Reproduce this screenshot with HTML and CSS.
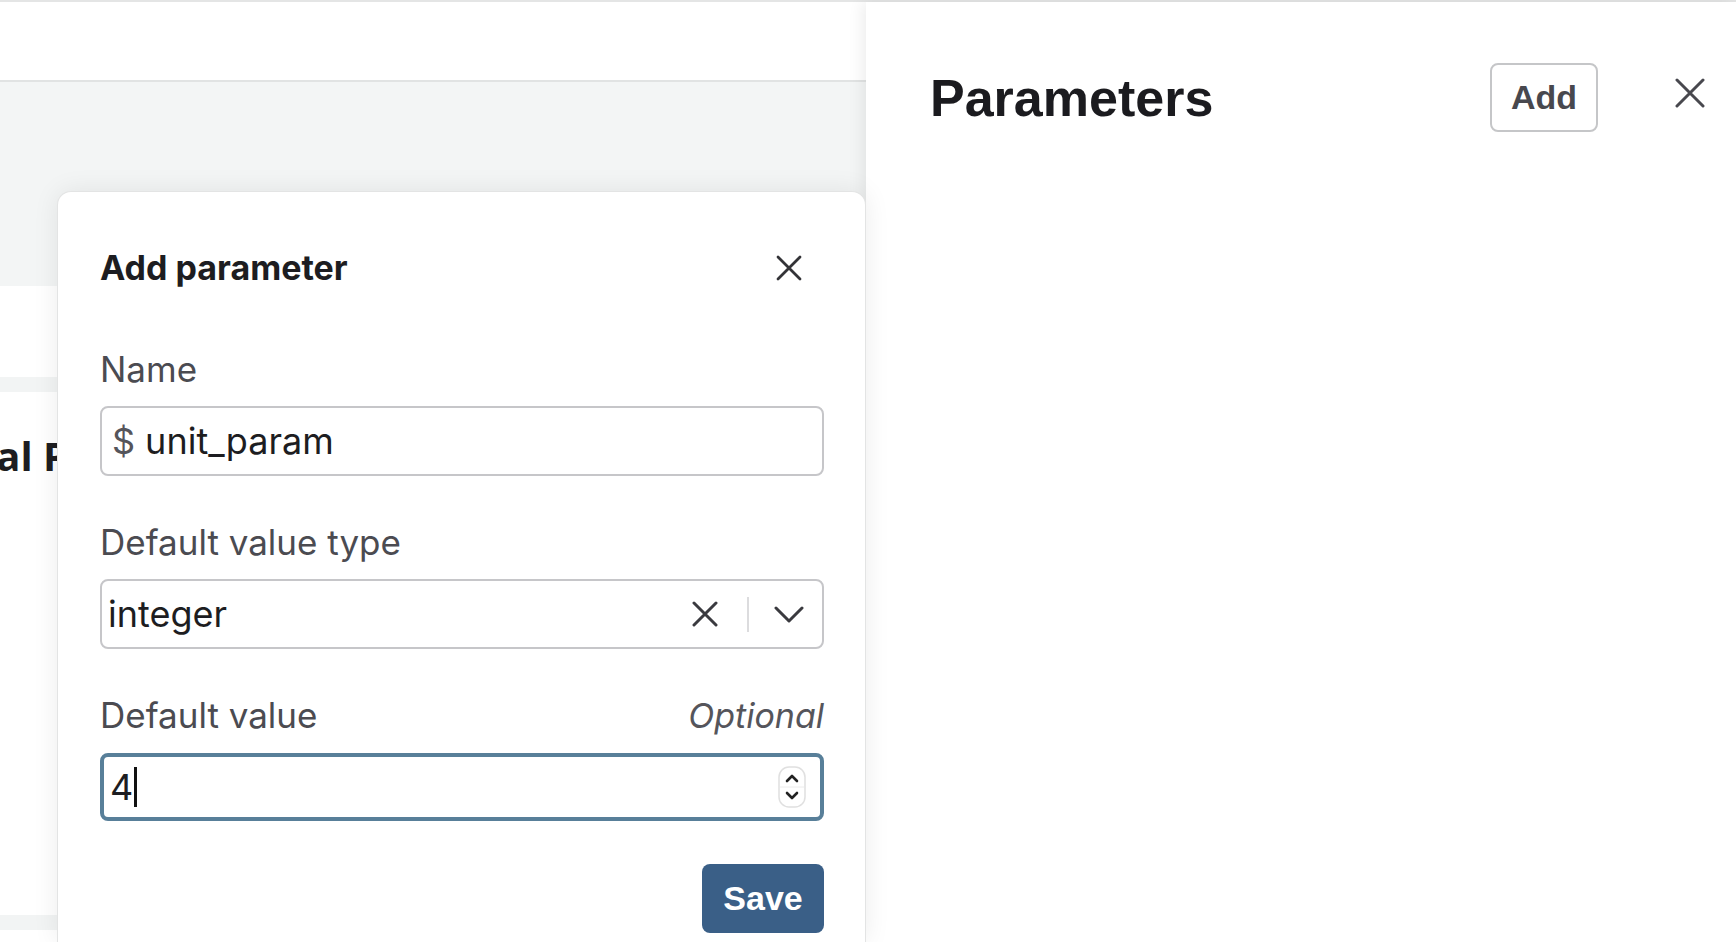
FILE: index.html
```html
<!DOCTYPE html>
<html lang="en">
<head>
<meta charset="utf-8">
<title>Parameters</title>
<link rel="stylesheet" href="styles.css">
</head>
<body>
<div class="page">
  <main class="main">
    <div class="main-header"></div>
    <div class="band"></div>
    <div class="gap-a"></div>
    <div class="strip"></div>
    <div class="section">
      <div class="section-clip">
        <h2 class="section-title">Global Parameters</h2>
      </div>
    </div>
    <div class="strip"></div>
  </main>
  <aside class="drawer">
    <div class="drawer-header">
      <h1 class="drawer-title">Parameters</h1>
      <button class="btn-add" type="button">Add</button>
      <button class="icon-btn drawer-close" type="button" aria-label="Close">
        <svg width="30" height="30" viewBox="0 0 30 30"><path d="M2 2 L28 28 M28 2 L2 28" stroke="#48484e" stroke-width="3" stroke-linecap="round" fill="none"/></svg>
      </button>
    </div>
  </aside>
</div>

<div class="modal">
  <div class="modal-header">
    <h3 class="modal-title">Add parameter</h3>
    <button class="icon-btn modal-close" type="button" aria-label="Close">
      <svg width="26" height="26" viewBox="0 0 26 26"><path d="M2 2 L24 24 M24 2 L2 24" stroke="#333337" stroke-width="2.8" stroke-linecap="round" fill="none"/></svg>
    </button>
  </div>

  <div class="field field-first">
    <div class="label-row"><span class="label">Name</span></div>
    <div class="control text-control">
      <span class="prefix">$</span><span class="value">unit_param</span>
    </div>
  </div>

  <div class="field">
    <div class="label-row"><span class="label">Default value type</span></div>
    <div class="control select-control">
      <span class="select-value">integer</span>
      <span class="clear-icon">
        <svg width="26" height="26" viewBox="0 0 26 26"><path d="M2 2 L24 24 M24 2 L2 24" stroke="#3a3a3f" stroke-width="3" stroke-linecap="round" fill="none"/></svg>
      </span>
      <span class="separator"></span>
      <span class="chevron">
        <svg width="30" height="17" viewBox="0 0 30 17"><path d="M2 2 L15 15 L28 2" stroke="#3a3a3f" stroke-width="3" stroke-linecap="round" stroke-linejoin="round" fill="none"/></svg>
      </span>
    </div>
  </div>

  <div class="field">
    <div class="label-row"><span class="label">Default value</span><span class="optional">Optional</span></div>
    <div class="control number-control">
      <span class="value">4</span><span class="caret"></span>
      <span class="spinner">
        <svg width="28" height="42" viewBox="0 0 28 42"><rect x="1" y="1" width="26" height="40" rx="10" fill="#fff" stroke="#e0e0e0" stroke-width="1.5"/><line x1="2" y1="21" x2="26" y2="21" stroke="#ececec" stroke-width="1"/><path d="M9 15 L14 10 L19 15" stroke="#222" stroke-width="2.6" stroke-linecap="round" stroke-linejoin="round" fill="none"/><path d="M9 27 L14 32 L19 27" stroke="#222" stroke-width="2.6" stroke-linecap="round" stroke-linejoin="round" fill="none"/></svg>
      </span>
    </div>
  </div>

  <div class="actions">
    <button class="btn-save" type="button">Save</button>
  </div>
</div>
</body>
</html>
```

FILE: styles.css
```css
* { box-sizing: border-box; }

html, body {
  margin: 0;
  padding: 0;
  height: 100%;
}

body {
  position: relative;
  overflow: hidden;
  background: #ffffff;
  color: #1d1d21;
  font-family: "Inter", "Roboto", sans-serif;
}

.page {
  display: flex;
  height: 942px;
  border-top: 2px solid #e4e5e5;
}

/* ---------- background page ---------- */
.main {
  width: 866px;
  flex: none;
  display: flex;
  flex-direction: column;
  overflow: hidden;
}

.main-header {
  height: 80px;
  flex: none;
  border-bottom: 2px solid #e1e3e3;
}

.band {
  height: 204px;
  flex: none;
  background: #f3f5f5;
}

.gap-a {
  height: 91px;
  flex: none;
}

.strip {
  height: 15px;
  flex: none;
  background: #f2f4f4;
}

.section {
  height: 523px;
  flex: none;
  padding-top: 40px;
}

.section-clip {
  width: 57px;
  overflow: hidden;
}

.section-title {
  margin: 0 0 0 -95px;
  font: 700 40px/48px "Open Sans", sans-serif;
  white-space: nowrap;
  color: #1d1d21;
}

/* ---------- drawer ---------- */
.drawer {
  flex: 1;
  position: relative;
  z-index: 1;
  background: #ffffff;
  box-shadow: -4px 0 14px rgba(0, 0, 0, 0.07);
}

.drawer-header {
  display: flex;
  align-items: center;
  padding: 61px 31px 0 64px;
}

.drawer-title {
  flex: 1;
  margin: 0;
  font: 700 52px "Liberation Sans", Arial, sans-serif;
  color: #1b1b1f;
}

.btn-add {
  width: 108px;
  height: 69px;
  padding: 0;
  margin-right: 77px;
  background: #ffffff;
  border: 2px solid #c5c6c8;
  border-radius: 8px;
  font: 700 34px "Liberation Sans", Arial, sans-serif;
  color: #48484e;
}

.icon-btn {
  display: flex;
  align-items: center;
  justify-content: center;
  padding: 0;
  border: 0;
  background: transparent;
}

.drawer-close {
  align-self: flex-start;
  margin-top: 15px;
  width: 30px;
  height: 30px;
}

/* ---------- modal ---------- */
.modal {
  position: absolute;
  left: 57px;
  top: 191px;
  bottom: 0;
  width: 809px;
  z-index: 2;
  padding: 55px 41px 0 42px;
  background: #ffffff;
  border: 1px solid #e3e4e4;
  border-bottom: 0;
  border-radius: 14px 14px 0 0;
  box-shadow: 0 0 26px rgba(0, 0, 0, 0.08);
}

.modal-header {
  display: flex;
  align-items: center;
  justify-content: space-between;
  height: 42px;
}

.modal-title {
  margin: 0;
  font: 700 34px/42px "Inter", sans-serif;
  color: #1d1d21;
}

.modal-close {
  width: 26px;
  height: 26px;
  margin-right: 22px;
}

.field {
  margin-top: 45px;
}

.field-first {
  margin-top: 59px;
}

.label-row {
  display: flex;
  justify-content: space-between;
  align-items: baseline;
  margin-bottom: 16px;
  font-size: 35px;
  line-height: 42px;
}

.label {
  color: #4b4b51;
}

.optional {
  font-size: 34px;
  font-style: italic;
  color: #55555b;
}

.control {
  display: flex;
  align-items: center;
  height: 70px;
  border: 2px solid #c6c6c9;
  border-radius: 8px;
  font-size: 36px;
  color: #1d1d21;
}

.text-control {
  padding: 0 10px;
}

.prefix {
  color: #55555b;
  margin-right: 10px;
}

.select-control {
  padding: 0 18px 0 6px;
}

.select-value {
  flex: 1;
}

.clear-icon,
.chevron {
  display: flex;
  align-items: center;
}

.separator {
  width: 2px;
  height: 35px;
  margin: 0 25px 0 29px;
  background: #dcdcde;
}

.number-control {
  height: 68px;
  border: 4px solid #587f99;
  padding: 0 14px 0 6px;
}

.caret {
  width: 3px;
  height: 40px;
  margin-left: 1px;
  background: #111111;
}

.spinner {
  display: flex;
  margin-left: auto;
}

.actions {
  display: flex;
  justify-content: flex-end;
  margin-top: 43px;
}

.btn-save {
  width: 122px;
  height: 69px;
  padding: 0;
  border: 0;
  border-radius: 8px;
  background: #3a5f87;
  color: #ffffff;
  font: 700 34px "Liberation Sans", Arial, sans-serif;
}
```
